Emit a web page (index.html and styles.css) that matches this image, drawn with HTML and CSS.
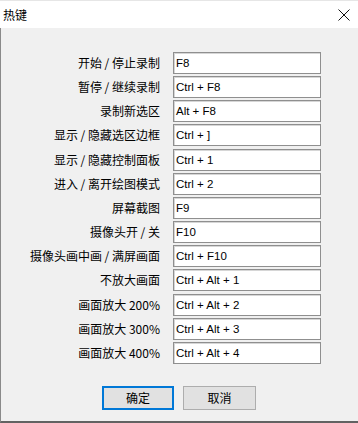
FILE: index.html
```html
<!DOCTYPE html>
<html lang="zh-CN">
<head>
  <meta charset="UTF-8">
  <title>热键</title>
  <link rel="stylesheet" href="styles.css">
</head>
<body>
  <div class="dialog">
    <div class="title-bar">
      <span class="title">热键</span>
      <svg class="close" width="12" height="12" viewBox="0 0 12 12">
        <path d="M0.5 0.5 L11.5 11.5 M11.5 0.5 L0.5 11.5" stroke="#111" stroke-width="1" fill="none"/>
      </svg>
    </div>

    <div class="content">
      <div class="hotkeys">
        <label>开始 / 停止录制</label><div class="field">F8</div>
        <label>暂停 / 继续录制</label><div class="field">Ctrl + F8</div>
        <label>录制新选区</label><div class="field">Alt + F8</div>
        <label>显示 / 隐藏选区边框</label><div class="field">Ctrl + ]</div>
        <label>显示 / 隐藏控制面板</label><div class="field">Ctrl + 1</div>
        <label>进入 / 离开绘图模式</label><div class="field">Ctrl + 2</div>
        <label>屏幕截图</label><div class="field">F9</div>
        <label>摄像头开 / 关</label><div class="field">F10</div>
        <label>摄像头画中画 / 满屏画面</label><div class="field">Ctrl + F10</div>
        <label>不放大画面</label><div class="field">Ctrl + Alt + 1</div>
        <label>画面放大 200%</label><div class="field">Ctrl + Alt + 2</div>
        <label>画面放大 300%</label><div class="field">Ctrl + Alt + 3</div>
        <label>画面放大 400%</label><div class="field">Ctrl + Alt + 4</div>
      </div>

      <div class="buttons">
        <button class="btn btn-default">确定</button>
        <button class="btn">取消</button>
      </div>
    </div>
  </div>
</body>
</html>
```

FILE: styles.css
```css
body {
  margin: 0;
  font-family: "Noto Sans CJK SC", "Liberation Sans", sans-serif;
  font-size: 12px;
  color: #000;
  background: #f0f0f0;
}

.dialog {
  width: 358px;
  height: 423px;
  display: flex;
  flex-direction: column;
  box-sizing: border-box;
}

.title-bar {
  height: 28px;
  background: #fff;
  border-top: 1px solid #e6e6e6;
  box-sizing: border-box;
  display: flex;
  align-items: center;
  justify-content: space-between;
  padding: 0 8px 0 3px;
}

.title {
  font-size: 12px;
  line-height: 14px;
}

.close {
  display: block;
  margin-top: 1px;
}

.content {
  flex: 1;
  background: #f0f0f0;
  border-left: 1px solid #8a8a8a;
  border-bottom: 2px solid #626262;
  padding-top: 24px;
}

.hotkeys {
  display: grid;
  grid-template-columns: 159px 148px;
  grid-auto-rows: 22px;
  column-gap: 13px;
  row-gap: 2.17px;
}

.hotkeys label {
  text-align: right;
  line-height: 22px;
  white-space: nowrap;
}

.field {
  background: #fff;
  border: 1px solid #8f8f8f;
  box-shadow: inset 1px 1px 0 #d6d6d6;
  box-sizing: border-box;
  padding-left: 2px;
  font-family: "Liberation Sans", Arial, sans-serif;
  font-size: 11.5px;
  line-height: 20px;
}

.buttons {
  display: flex;
  justify-content: center;
  gap: 9px;
  margin-top: 22px;
  padding-right: 1px;
}

.btn {
  width: 73px;
  height: 24px;
  background: #e1e1e1;
  border: 1px solid #adadad;
  font-family: "Noto Sans CJK SC", sans-serif;
  font-size: 12px;
  padding: 0;
}

.btn-default {
  width: 72px;
  border: 2px solid #0078d7;
}
```
